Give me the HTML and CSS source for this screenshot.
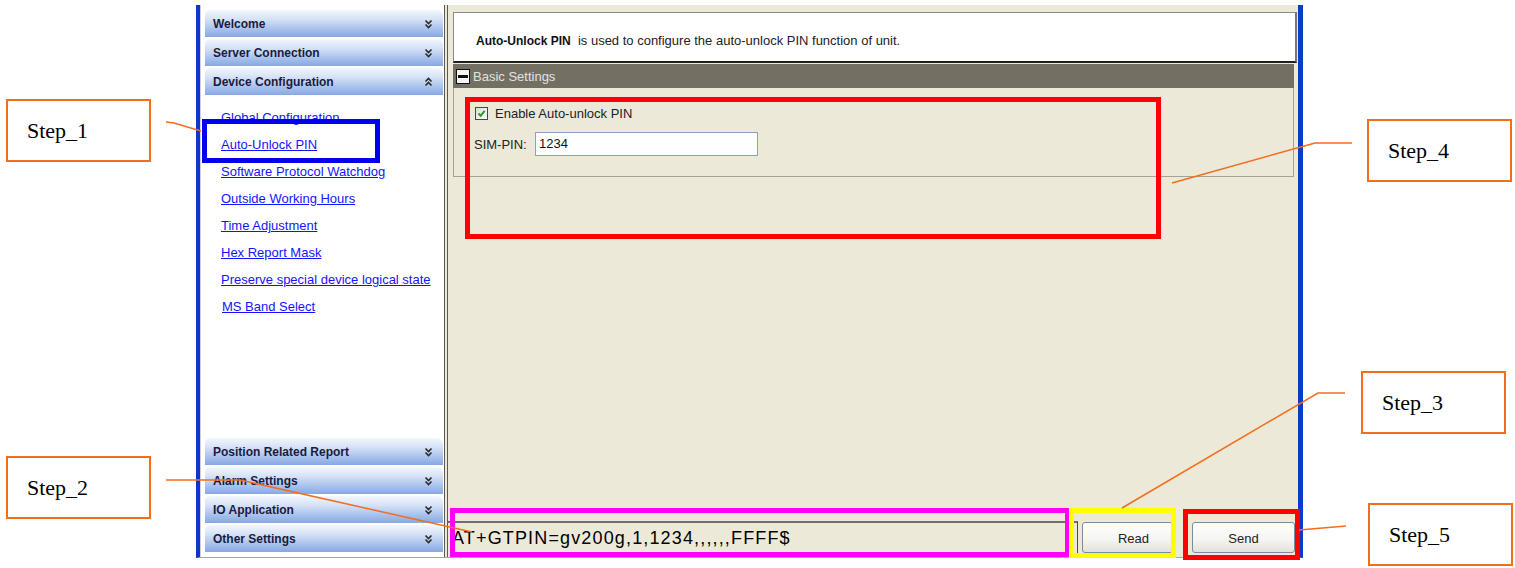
FILE: index.html
```html
<!DOCTYPE html>
<html lang="en">
<head>
<meta charset="utf-8">
<title>Auto-Unlock PIN</title>
<link rel="stylesheet" href="styles.css">
</head>
<body>
<div class="page">
  <div class="window">
    <aside class="sidebar">
      <div class="nav-group">
        <div class="nav-head"><span>Welcome</span><svg class="chev" width="9" height="10" viewBox="0 0 9 10"><path d="M1.5 1.5l3 3 3-3M1.5 5.5l3 3 3-3"/></svg></div>
        <div class="nav-head"><span>Server Connection</span><svg class="chev" width="9" height="10" viewBox="0 0 9 10"><path d="M1.5 1.5l3 3 3-3M1.5 5.5l3 3 3-3"/></svg></div>
        <div class="nav-head"><span>Device Configuration</span><svg class="chev" width="9" height="10" viewBox="0 0 9 10"><path d="M1.5 4.5l3-3 3 3M1.5 8.5l3-3 3 3"/></svg></div>
      </div>
      <ul class="nav-links">
        <li><a href="#">Global Configuration</a></li>
        <li><a href="#">Auto-Unlock PIN</a></li>
        <li><a href="#">Software Protocol Watchdog</a></li>
        <li><a href="#">Outside Working Hours</a></li>
        <li><a href="#">Time Adjustment</a></li>
        <li><a href="#">Hex Report Mask</a></li>
        <li><a href="#">Preserve special device logical state</a></li>
        <li class="shift"><a href="#">MS Band Select</a></li>
      </ul>
      <div class="nav-group nav-bottom">
        <div class="nav-head"><span>Position Related Report</span><svg class="chev" width="9" height="10" viewBox="0 0 9 10"><path d="M1.5 1.5l3 3 3-3M1.5 5.5l3 3 3-3"/></svg></div>
        <div class="nav-head"><span>Alarm Settings</span><svg class="chev" width="9" height="10" viewBox="0 0 9 10"><path d="M1.5 1.5l3 3 3-3M1.5 5.5l3 3 3-3"/></svg></div>
        <div class="nav-head"><span>IO Application</span><svg class="chev" width="9" height="10" viewBox="0 0 9 10"><path d="M1.5 1.5l3 3 3-3M1.5 5.5l3 3 3-3"/></svg></div>
        <div class="nav-head"><span>Other Settings</span><svg class="chev" width="9" height="10" viewBox="0 0 9 10"><path d="M1.5 1.5l3 3 3-3M1.5 5.5l3 3 3-3"/></svg></div>
      </div>
    </aside>
    <div class="divider"></div>
    <main class="main">
      <div class="desc"><b>Auto-Unlock PIN</b>&nbsp; is used to configure the auto-unlock PIN function of unit.</div>
      <section class="settings">
        <div class="settings-bar"><span class="collapse-icon"></span>Basic Settings</div>
        <div class="settings-body">
          <div class="check-row">
            <span class="checkbox"><svg width="11" height="11" viewBox="0 0 11 11"><path d="M2.5 5.5l2.2 2.3 4-5" fill="none" stroke="#21a121" stroke-width="2"/></svg></span>
            <span>Enable Auto-unlock PIN</span>
          </div>
          <div class="field-row">
            <span class="field-label">SIM-PIN:</span>
            <span class="input">1234</span>
          </div>
        </div>
      </section>
      <div class="spacer"></div>
      <div class="command-row">
        <div class="command">AT+GTPIN=gv200g,1,1234,,,,,,FFFF$</div>
        <button class="btn btn-read">Read</button>
        <button class="btn btn-send">Send</button>
      </div>
    </main>
  </div>

  <!-- callout marks -->
  <div class="mark mark-blue"></div>
  <div class="mark mark-red-settings"></div>
  <div class="mark mark-magenta"></div>
  <div class="mark mark-yellow"></div>
  <div class="mark mark-red-send"></div>

  <svg class="leaders" width="1515" height="568" viewBox="0 0 1515 568">
    <polyline points="166,122 174,123 201,131"/>
    <polyline points="166,480 240,480 472,532"/>
    <polyline points="1122,508 1318,393 1345,393"/>
    <polyline points="1172,183 1315,143 1352,143"/>
    <polyline points="1299,530 1346,526"/>
  </svg>

  <div class="step step-1">Step_1</div>
  <div class="step step-2">Step_2</div>
  <div class="step step-3">Step_3</div>
  <div class="step step-4">Step_4</div>
  <div class="step step-5">Step_5</div>
</div>
</body>
</html>
```

FILE: styles.css
```css
html, body {
  margin: 0;
  padding: 0;
  background: #ffffff;
}

body {
  font-family: "Liberation Sans", Arial, sans-serif;
  font-size: 13px;
  color: #1e1e1e;
  width: 1515px;
  height: 568px;
  overflow: hidden;
}

.page {
  position: relative;
  width: 1515px;
  height: 568px;
  padding: 5px 0 0 196px;
  box-sizing: border-box;
}

/* application window */
.window {
  display: flex;
  width: 1107px;
  height: 553px;
  box-sizing: border-box;
  border-left: 4px solid #0a36cf;
  border-right: 5px solid #0a3bc9;
  border-bottom: 1px solid #a9a69a;
}

/* left navigation */
.sidebar {
  width: 244px;
  box-sizing: border-box;
  display: flex;
  flex-direction: column;
  background: #ffffff;
  border-left: 1px solid #cfcfcf;
  padding: 5px 1px 3px 4px;
}

.nav-head {
  height: 27px;
  margin-bottom: 2px;
  box-sizing: border-box;
  display: flex;
  align-items: center;
  justify-content: space-between;
  padding: 0 10px 0 8px;
  border-radius: 5px 6px 0 0;
  background: linear-gradient(to bottom, #f3f7fd 0%, #d4e1f6 35%, #a9c2ec 70%, #86a8e2 100%);
  font-weight: bold;
  font-size: 12px;
  color: #1b1b40;
}

.chev path {
  fill: none;
  stroke: #2a2a2a;
  stroke-width: 1.6;
}

.nav-links {
  list-style: none;
  margin: 0;
  padding: 7px 0 0 16px;
}

.nav-links li {
  line-height: 27px;
  height: 27px;
}

.nav-links li.shift {
  padding-left: 1px;
  line-height: 28px;
}

.nav-links a {
  color: #1414ff;
  text-decoration: underline;
  font-size: 13px;
}

.nav-bottom {
  margin-top: auto;
}

.divider {
  width: 4px;
  box-sizing: border-box;
  background: #ece9d8;
  border-left: 1px solid #5a5a5a;
  border-right: 1px solid #5a5a5a;
}

/* content area */
.main {
  width: 850px;
  display: flex;
  flex-direction: column;
  background: #ece9d8;
  padding-top: 7px;
  box-sizing: border-box;
}

.desc {
  margin: 0 1px 0 5px;
  height: 51px;
  box-sizing: border-box;
  background: #ffffff;
  border: 1px solid #8a8a8a;
  border-bottom: 2px solid #1e1e1e;
  border-right: 2px solid #777;
  padding: 21px 0 0 22px;
  line-height: 14px;
  font-size: 13px;
  color: #222;
}

.desc b {
  font-size: 12px;
  color: #111;
}

.settings {
  margin: 1px 4px 0 5px;
}

.settings-bar {
  height: 24px;
  display: flex;
  align-items: center;
  background: #736f63;
  color: #e2e2e2;
  font-size: 13px;
  padding-left: 3px;
}

.collapse-icon {
  position: relative;
  width: 14px;
  height: 15px;
  box-sizing: border-box;
  background: #f4f4f4;
  border: 1px solid #111;
  margin-right: 3px;
}

.collapse-icon::after {
  content: "";
  position: absolute;
  left: 1px;
  right: 1px;
  top: 5px;
  height: 3px;
  background: #111;
}

.settings-body {
  height: 89px;
  box-sizing: border-box;
  border: 1px solid #a5a294;
  border-top: none;
  padding: 18px 0 0 20px;
}

.check-row {
  display: flex;
  align-items: center;
  height: 14px;
  color: #222;
}

.checkbox {
  width: 13px;
  height: 13px;
  box-sizing: border-box;
  border: 1px solid #1c5180;
  background: linear-gradient(135deg, #dcdcd6, #ffffff);
  display: flex;
  align-items: center;
  justify-content: center;
  margin: 0 7px 0 1px;
}

.field-row {
  display: flex;
  align-items: center;
  margin-top: 12px;
}

.field-label {
  width: 61px;
  color: #222;
}

.input {
  width: 223px;
  height: 24px;
  box-sizing: border-box;
  background: #ffffff;
  border: 1px solid #8aa4c0;
  padding: 0 3px;
  line-height: 22px;
  color: #111;
}

.spacer {
  flex: 1;
}

.command-row {
  display: flex;
  align-items: flex-start;
  height: 32px;
  margin-bottom: 4px;
}

.command {
  width: 630px;
  height: 32px;
  box-sizing: border-box;
  border-top: 2px solid #6e6e6e;
  border-right: 1px solid #4a4a4a;
  padding: 2px 0 0 4px;
  font-size: 18px;
  letter-spacing: 1.15px;
  line-height: 26px;
  color: #000;
  white-space: nowrap;
  overflow: hidden;
}

.btn {
  margin-top: 1px;
  height: 31px;
  box-sizing: border-box;
  border: 1px solid #7a8ca4;
  border-radius: 3px;
  background: linear-gradient(to bottom, #ffffff 0%, #f4f4f0 60%, #e3e1d9 100%);
  font-family: "Liberation Sans", Arial, sans-serif;
  font-size: 13px;
  color: #222;
  padding: 2px 0 0;
}

.btn-read {
  width: 91px;
  margin-left: 4px;
  padding-left: 12px;
}

.btn-send {
  width: 103px;
  margin-left: 19px;
}

/* callout highlight frames */
.mark {
  position: absolute;
  box-sizing: border-box;
  border: 5px solid;
}

.mark-blue {
  left: 202px;
  top: 119px;
  width: 178px;
  height: 44px;
  border-color: #0000ee;
}

.mark-red-settings {
  left: 465px;
  top: 97px;
  width: 696px;
  height: 142px;
  border-color: #ff0000;
}

.mark-magenta {
  left: 450px;
  top: 508px;
  width: 620px;
  height: 49px;
  border-color: #ff00ff;
}

.mark-yellow {
  left: 1069px;
  top: 508px;
  width: 107px;
  height: 50px;
  border-color: #ffff00;
}

.mark-red-send {
  left: 1183px;
  top: 509px;
  width: 117px;
  height: 51px;
  border-color: #ff0000;
}

.leaders {
  position: absolute;
  left: 0;
  top: 0;
  pointer-events: none;
}

.leaders polyline {
  fill: none;
  stroke: #f26d1c;
  stroke-width: 1.5;
}

/* step labels */
.step {
  position: absolute;
  width: 145px;
  height: 63px;
  box-sizing: border-box;
  border: 2px solid #f26d1c;
  background: #ffffff;
  font-family: "Liberation Serif", "Times New Roman", serif;
  font-size: 22px;
  color: #000;
  padding-left: 19px;
  line-height: 59px;
}

.step-1 { left: 6px; top: 99px; }
.step-2 { left: 6px; top: 456px; }
.step-3 { left: 1361px; top: 371px; }
.step-4 { left: 1367px; top: 119px; }
.step-5 { left: 1368px; top: 503px; }
```
